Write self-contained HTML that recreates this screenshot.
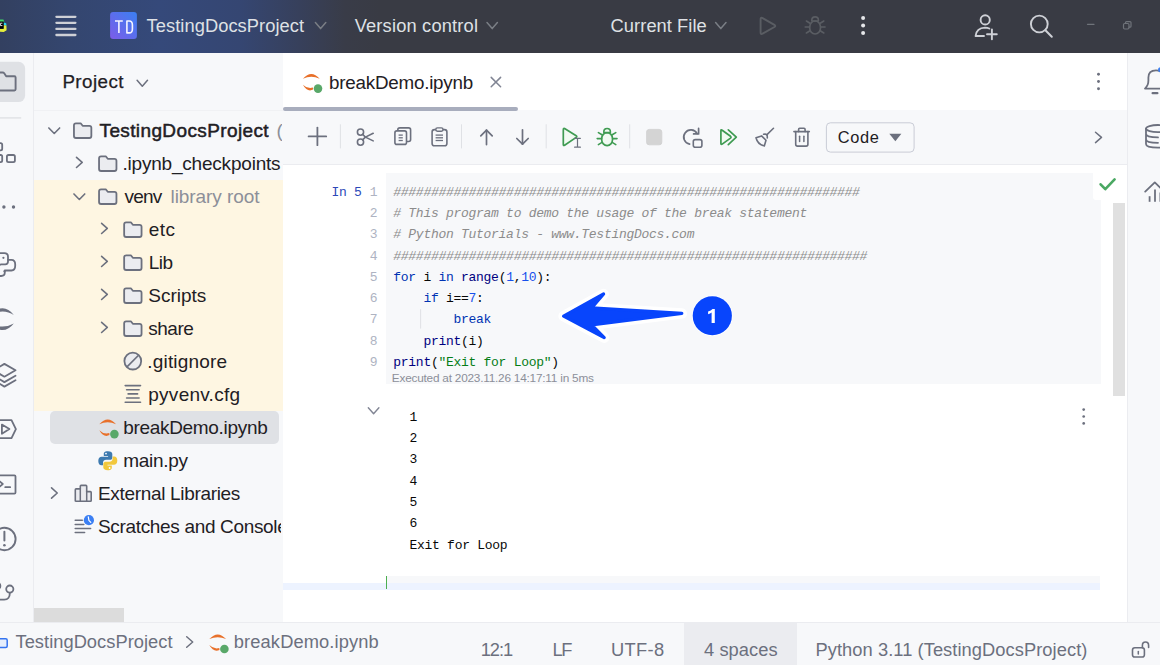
<!DOCTYPE html>
<html><head><meta charset="utf-8"><style>
html,body{margin:0;padding:0;width:1160px;height:665px;overflow:hidden;background:#fff;position:relative}
.a{position:absolute}
.t{position:absolute;white-space:pre;line-height:normal}
svg{position:absolute;overflow:visible}
#title{left:0;top:0;width:1160px;height:53px;background:#393b44}
#titleglow{left:0;top:0;width:1160px;height:53px;background:linear-gradient(90deg,#334060 0px,#34466f 70px,#35497a 160px,#354672 240px,#37405b 300px,#393c48 345px,#393b44 380px)}
#lstrip{left:0;top:53px;width:33px;height:569px;background:#f7f8fa;border-right:1px solid #ebecf0}
#panel{left:34px;top:53px;width:249px;height:569px;background:#f7f8fa}
#yellow{left:34px;top:180px;width:249px;height:231px;background:#fef6e2}
#sel{left:50px;top:411.2px;width:228.5px;height:32.8px;background:#dfe1e5;border-radius:5px}
#editor{left:283px;top:53px;width:844px;height:569px;background:#fff}
#rstrip{left:1127px;top:53px;width:33px;height:569px;background:#f7f8fa;border-left:1px solid #ebecf0}
#status{left:0;top:622px;width:1160px;height:43px;background:#f7f8fa;border-top:1px solid #ebecf0}
#tabline{left:283px;top:107px;width:235px;height:4px;background:#a8adbd;border-radius:2px}
#toolbar{left:283px;top:110px;width:844px;height:54px;background:#f7f8fa;border-bottom:1px solid #ebecf0}
#cell{left:385.5px;top:173px;width:715.5px;height:211px;background:#f7f8fa}
#vscroll{left:1113px;top:203px;width:12.3px;height:192.6px;background:#e0e0e0}
#hscroll{left:34px;top:608px;width:90px;height:13.5px;background:#dcdcdc}
#checkbox{left:1092.5px;top:173px;width:34.5px;height:26.5px;background:#fff;border-bottom-left-radius:3px}
#emptycell{left:387px;top:575.7px;width:713px;height:14px;background:#f7f8fa}
#curline{left:283px;top:583px;width:817px;height:6.6px;background:#edf3ff}
#cursor{left:385.6px;top:575.7px;width:1.7px;height:13.4px;background:#4caf50}
#spaces{left:684px;top:623px;width:113px;height:42px;background:#ebecf0}
#hdrline{left:34px;top:110px;width:249px;height:1px;background:#f0f1f4}

</style></head><body>
<div class="a" id="title"></div>
<div class="a" id="titleglow"></div>
<div class="a" id="lstrip"></div>
<div class="a" id="panel"></div>
<div class="a" id="hdrline"></div>
<div class="a" id="yellow"></div>
<div class="a" id="sel"></div>
<div class="a" id="editor"></div>
<div class="a" id="rstrip"></div>
<div class="a" id="status"></div>
<div class="a" id="spaces"></div>
<div class="a" id="toolbar"></div>
<div class="a" id="tabline"></div>
<div class="a" id="cell"></div>
<div class="a" id="vscroll"></div>
<div class="a" id="hscroll"></div>
<div class="a" id="checkbox"></div>
<div class="a" id="emptycell"></div>
<div class="a" id="curline"></div>
<div class="a" id="cursor"></div>

<svg width="1160" height="665" style="left:0;top:0"><path d="M73.95,125.30 Q73.95,123.30 75.95,123.30 L80.65,123.30 L82.65,125.80 L89.35,125.80 Q91.35,125.80 91.35,127.80 L91.35,136.00 Q91.35,138.00 89.35,138.00 L75.95,138.00 Q73.95,138.00 73.95,136.00 Z" fill="#ebecf0" stroke="#6c707e" stroke-width="1.8" stroke-linejoin="round"/><path d="M48.85,127.95 L54.25,133.45 L59.65,127.95" fill="none" stroke="#6c707e" stroke-width="1.6" stroke-linecap="round" stroke-linejoin="round"/><path d="M99.05,158.30 Q99.05,156.30 101.05,156.30 L105.75,156.30 L107.75,158.80 L114.45,158.80 Q116.45,158.80 116.45,160.80 L116.45,169.00 Q116.45,171.00 114.45,171.00 L101.05,171.00 Q99.05,171.00 99.05,169.00 Z" fill="#ebecf0" stroke="#6c707e" stroke-width="1.8" stroke-linejoin="round"/><path d="M76.50,157.30 L82.20,162.40 L76.50,167.50" fill="none" stroke="#6c707e" stroke-width="1.6" stroke-linecap="round" stroke-linejoin="round"/><path d="M99.05,191.30 Q99.05,189.30 101.05,189.30 L105.75,189.30 L107.75,191.80 L114.45,191.80 Q116.45,191.80 116.45,193.80 L116.45,202.00 Q116.45,204.00 114.45,204.00 L101.05,204.00 Q99.05,204.00 99.05,202.00 Z" fill="#ebecf0" stroke="#6c707e" stroke-width="1.8" stroke-linejoin="round"/><path d="M73.95,193.95 L79.35,199.45 L84.75,193.95" fill="none" stroke="#6c707e" stroke-width="1.6" stroke-linecap="round" stroke-linejoin="round"/><path d="M124.15,224.30 Q124.15,222.30 126.15,222.30 L130.85,222.30 L132.85,224.80 L139.55,224.80 Q141.55,224.80 141.55,226.80 L141.55,235.00 Q141.55,237.00 139.55,237.00 L126.15,237.00 Q124.15,237.00 124.15,235.00 Z" fill="#ebecf0" stroke="#6c707e" stroke-width="1.8" stroke-linejoin="round"/><path d="M101.60,223.30 L107.30,228.40 L101.60,233.50" fill="none" stroke="#6c707e" stroke-width="1.6" stroke-linecap="round" stroke-linejoin="round"/><path d="M124.15,257.30 Q124.15,255.30 126.15,255.30 L130.85,255.30 L132.85,257.80 L139.55,257.80 Q141.55,257.80 141.55,259.80 L141.55,268.00 Q141.55,270.00 139.55,270.00 L126.15,270.00 Q124.15,270.00 124.15,268.00 Z" fill="#ebecf0" stroke="#6c707e" stroke-width="1.8" stroke-linejoin="round"/><path d="M101.60,256.30 L107.30,261.40 L101.60,266.50" fill="none" stroke="#6c707e" stroke-width="1.6" stroke-linecap="round" stroke-linejoin="round"/><path d="M124.15,290.30 Q124.15,288.30 126.15,288.30 L130.85,288.30 L132.85,290.80 L139.55,290.80 Q141.55,290.80 141.55,292.80 L141.55,301.00 Q141.55,303.00 139.55,303.00 L126.15,303.00 Q124.15,303.00 124.15,301.00 Z" fill="#ebecf0" stroke="#6c707e" stroke-width="1.8" stroke-linejoin="round"/><path d="M101.60,289.30 L107.30,294.40 L101.60,299.50" fill="none" stroke="#6c707e" stroke-width="1.6" stroke-linecap="round" stroke-linejoin="round"/><path d="M124.15,323.30 Q124.15,321.30 126.15,321.30 L130.85,321.30 L132.85,323.80 L139.55,323.80 Q141.55,323.80 141.55,325.80 L141.55,334.00 Q141.55,336.00 139.55,336.00 L126.15,336.00 Q124.15,336.00 124.15,334.00 Z" fill="#ebecf0" stroke="#6c707e" stroke-width="1.8" stroke-linejoin="round"/><path d="M101.60,322.30 L107.30,327.40 L101.60,332.50" fill="none" stroke="#6c707e" stroke-width="1.6" stroke-linecap="round" stroke-linejoin="round"/><path d="M99.30,424.20 Q107.70,414.80 116.10,424.20 Q107.70,420.40 99.30,424.20 Z" fill="#e8702a"/><path d="M99.30,430.20 Q103.70,438.00 109.50,435.10 L109.30,433.10 Q103.70,434.60 99.30,430.20 Z" fill="#e8702a"/><circle cx="114.40" cy="434.10" r="4.30" fill="#59a869"/><g transform="translate(97.8,450.8) scale(1.0)"><path d="M10 0.5 C6.5 0.5 6 2 6 3.2 V5.2 H10.3 V6 H3.8 C2 6 0.5 7.3 0.5 10.2 C0.5 13 1.8 14.4 3.6 14.4 H5.2 V12 C5.2 10.3 6.6 9 8.3 9 H12.3 C13.7 9 14.5 8 14.5 6.6 V3.2 C14.5 1.8 13.2 0.5 10 0.5 Z" fill="#3d7ab0"/><path d="M10 19.5 C13.5 19.5 14 18 14 16.8 V14.8 H9.7 V14 H16.2 C18 14 19.5 12.7 19.5 9.8 C19.5 7 18.2 5.6 16.4 5.6 H14.8 V8 C14.8 9.7 13.4 11 11.7 11 H7.7 C6.3 11 5.5 12 5.5 13.4 V16.8 C5.5 18.2 6.8 19.5 10 19.5 Z" fill="#f2c83c"/><circle cx="8.2" cy="2.8" r="0.9" fill="#fff"/><circle cx="11.8" cy="17.2" r="0.9" fill="#fff"/></g><path d="M302.90,78.70 Q311.30,69.30 319.70,78.70 Q311.30,74.90 302.90,78.70 Z" fill="#e8702a"/><path d="M302.90,84.70 Q307.30,92.50 313.10,89.60 L312.90,87.60 Q307.30,89.10 302.90,84.70 Z" fill="#e8702a"/><circle cx="318.00" cy="88.60" r="4.30" fill="#59a869"/><path d="M209.30,639.10 Q217.70,629.70 226.10,639.10 Q217.70,635.30 209.30,639.10 Z" fill="#e8702a"/><path d="M209.30,645.10 Q213.70,652.90 219.50,650.00 L219.30,648.00 Q213.70,649.50 209.30,645.10 Z" fill="#e8702a"/><circle cx="224.40" cy="649.00" r="4.30" fill="#59a869"/><path d="M-2,19.6 H3.4 L4.3,21.8 H-2 Z" fill="#3fd86a"/><path d="M3.6,22.4 L6.2,23.2 L6.5,25.6 L3.6,25.6 Z" fill="#27d3f0"/><path d="M3.6,25.2 L6.4,25.6 L6.6,30.2 L3.8,31.9 L-2,31.6 V28.8 H3.6 Z" fill="#e5ee3c"/><rect x="-2" y="21.6" width="5.6" height="7.2" fill="#000"/><path d="M2.4,23.2 H0.4 V25.6 H2.4" fill="none" stroke="#ddd" stroke-width="1"/><line x1="56.4" y1="16.8" x2="75.4" y2="16.8" stroke="#ced0d6" stroke-width="2.3" stroke-linecap="round"/><line x1="56.4" y1="22.8" x2="75.4" y2="22.8" stroke="#ced0d6" stroke-width="2.3" stroke-linecap="round"/><line x1="56.4" y1="28.9" x2="75.4" y2="28.9" stroke="#ced0d6" stroke-width="2.3" stroke-linecap="round"/><line x1="56.4" y1="35.0" x2="75.4" y2="35.0" stroke="#ced0d6" stroke-width="2.3" stroke-linecap="round"/><defs><linearGradient id="tdg" x1="1" y1="0" x2="0" y2="1"><stop offset="0" stop-color="#3a80f2"/><stop offset="1" stop-color="#7d5ce8"/></linearGradient></defs><rect x="110.1" y="11.9" width="26.8" height="27" rx="3" fill="url(#tdg)"/><path d="M115,21.0 H122.8 M118.9,21.0 V32.9" fill="none" stroke="#f4f4ff" stroke-width="1.6" stroke-linecap="butt" stroke-linejoin="round" /><path d="M126.9,21.0 H129.2 Q132.4,21.0 132.4,25 V28.9 Q132.4,32.9 129.2,32.9 H126.9 Z" fill="none" stroke="#f4f4ff" stroke-width="1.6" stroke-linecap="round" stroke-linejoin="round" /><path d="M315.40,22.60 L320.60,28.60 L325.80,22.60" fill="none" stroke="#7a7e85" stroke-width="1.5" stroke-linecap="round" stroke-linejoin="round"/><path d="M487.00,22.60 L492.20,28.60 L497.40,22.60" fill="none" stroke="#7a7e85" stroke-width="1.5" stroke-linecap="round" stroke-linejoin="round"/><path d="M715.60,22.60 L720.80,28.60 L726.00,22.60" fill="none" stroke="#7a7e85" stroke-width="1.5" stroke-linecap="round" stroke-linejoin="round"/><path d="M760.6,19.2 L760.6,32.6 Q760.6,34.8 762.6,33.7 L774.4,27.0 Q776.2,25.9 774.4,24.8 L762.6,18.1 Q760.6,17.0 760.6,19.2 Z" fill="none" stroke="#5a5d63" stroke-width="1.9" stroke-linecap="round" stroke-linejoin="round" /><g transform="translate(208.0,-111.6)"><rect x="601.7" y="132.6" width="10.8" height="13.0" rx="5.4" ry="5.9" fill="none" stroke="#5a5d63" stroke-width="1.7"/><path d="M603.8,132.6 V131.8 Q603.8,128.5 607.1,128.5 Q610.4,128.5 610.4,131.8 V132.6 Z" fill="none" stroke="#5a5d63" stroke-width="1.6" stroke-linecap="round" stroke-linejoin="round" /><line x1="601.6" y1="138.6" x2="597.2" y2="138.6" stroke="#5a5d63" stroke-width="1.6" stroke-linecap="round"/><line x1="612.6" y1="138.6" x2="617.0" y2="138.6" stroke="#5a5d63" stroke-width="1.6" stroke-linecap="round"/><line x1="602.0" y1="134.8" x2="598.4" y2="132.6" stroke="#5a5d63" stroke-width="1.6" stroke-linecap="round"/><line x1="612.2" y1="134.8" x2="615.8" y2="132.6" stroke="#5a5d63" stroke-width="1.6" stroke-linecap="round"/><line x1="602.0" y1="142.4" x2="598.4" y2="144.6" stroke="#5a5d63" stroke-width="1.6" stroke-linecap="round"/><line x1="612.2" y1="142.4" x2="615.8" y2="144.6" stroke="#5a5d63" stroke-width="1.6" stroke-linecap="round"/></g><circle cx="863.1" cy="18.1" r="2.0" fill="#e6e7ea"/><circle cx="863.1" cy="25.6" r="2.0" fill="#e6e7ea"/><circle cx="863.1" cy="32.9" r="2.0" fill="#e6e7ea"/><circle cx="985.2" cy="19.9" r="4.6" fill="none" stroke="#ced0d6" stroke-width="1.9"/><path d="M975.6,36 Q976.5,27.8 985,27.6 Q987.5,27.6 989.3,28.5 M975.6,36 H984" fill="none" stroke="#ced0d6" stroke-width="1.9" stroke-linecap="round" stroke-linejoin="round" /><line x1="991.9" y1="29.4" x2="991.9" y2="39.2" stroke="#ced0d6" stroke-width="1.9" stroke-linecap="round"/><line x1="987" y1="34.3" x2="996.8" y2="34.3" stroke="#ced0d6" stroke-width="1.9" stroke-linecap="round"/><circle cx="1039.3" cy="24.0" r="8.4" fill="none" stroke="#ced0d6" stroke-width="1.9"/><line x1="1045.4" y1="30.2" x2="1051.8" y2="36.8" stroke="#ced0d6" stroke-width="2.0" stroke-linecap="round"/><line x1="1087.5" y1="24.3" x2="1094" y2="24.3" stroke="#6f737a" stroke-width="1.3" stroke-linecap="round"/><rect x="1123.5" y="23.5" width="5.5" height="5.5" rx="1.2" fill="none" stroke="#6f737a" stroke-width="1.2"/><path d="M1125.5,23.5 V22.6 Q1125.5,21.6 1126.5,21.6 H1130 Q1131,21.6 1131,22.6 V26.2 Q1131,27.2 1130,27.2 H1129" fill="none" stroke="#6f737a" stroke-width="1.2" stroke-linecap="round" stroke-linejoin="round" /><path d="M137.10,80.30 L142.30,86.30 L147.50,80.30" fill="none" stroke="#6c707e" stroke-width="1.5" stroke-linecap="round" stroke-linejoin="round"/><line x1="491.2" y1="77.4" x2="500.6" y2="86.8" stroke="#818594" stroke-width="1.5" stroke-linecap="round"/><line x1="500.6" y1="77.4" x2="491.2" y2="86.8" stroke="#818594" stroke-width="1.5" stroke-linecap="round"/><circle cx="1098.5" cy="74.2" r="1.45" fill="#6c707e"/><circle cx="1098.5" cy="81.5" r="1.45" fill="#6c707e"/><circle cx="1098.5" cy="88.7" r="1.45" fill="#6c707e"/><line x1="340.4" y1="124.3" x2="340.4" y2="148.4" stroke="#dfe1e5" stroke-width="1.0" stroke-linecap="butt"/><line x1="461.5" y1="124.3" x2="461.5" y2="148.4" stroke="#dfe1e5" stroke-width="1.0" stroke-linecap="butt"/><line x1="546.2" y1="124.3" x2="546.2" y2="148.4" stroke="#dfe1e5" stroke-width="1.0" stroke-linecap="butt"/><line x1="629.7" y1="124.3" x2="629.7" y2="148.4" stroke="#dfe1e5" stroke-width="1.0" stroke-linecap="butt"/><line x1="317.4" y1="127.6" x2="317.4" y2="145.2" stroke="#6c707e" stroke-width="1.8" stroke-linecap="round"/><line x1="308.6" y1="136.4" x2="326.2" y2="136.4" stroke="#6c707e" stroke-width="1.8" stroke-linecap="round"/><circle cx="360.5" cy="132.1" r="3.1" fill="none" stroke="#6c707e" stroke-width="1.6"/><circle cx="360.5" cy="142.1" r="3.1" fill="none" stroke="#6c707e" stroke-width="1.6"/><path d="M362.6,134.3 L365.4,137.1 L373.2,140.9" fill="none" stroke="#6c707e" stroke-width="1.6" stroke-linecap="round" stroke-linejoin="round" /><path d="M362.6,139.9 L365.4,137.1 L373.2,133.3" fill="none" stroke="#6c707e" stroke-width="1.6" stroke-linecap="round" stroke-linejoin="round" /><path d="M397.8,130 V129.8 Q397.8,127.9 399.9,127.9 H408.6 Q410.6,127.9 410.6,129.9 V139.5 Q410.6,141.5 408.6,141.5 H407.4" fill="none" stroke="#6c707e" stroke-width="1.6" stroke-linecap="round" stroke-linejoin="round" /><rect x="394.9" y="130.9" width="11.6" height="13.5" rx="2" fill="none" stroke="#6c707e" stroke-width="1.6"/><line x1="398.6" y1="135.1" x2="402.8" y2="135.1" stroke="#6c707e" stroke-width="1.3" stroke-linecap="butt"/><line x1="398.6" y1="137.8" x2="402.8" y2="137.8" stroke="#6c707e" stroke-width="1.3" stroke-linecap="butt"/><line x1="398.6" y1="140.5" x2="402.8" y2="140.5" stroke="#6c707e" stroke-width="1.3" stroke-linecap="butt"/><rect x="432.1" y="129.6" width="14.8" height="16.2" rx="2.3" fill="none" stroke="#6c707e" stroke-width="1.6"/><rect x="435.8" y="127.9" width="7.2" height="3.3" rx="1.6" fill="#f7f8fa" stroke="#6c707e" stroke-width="1.4"/><line x1="435.6" y1="135.1" x2="443" y2="135.1" stroke="#6c707e" stroke-width="1.3" stroke-linecap="butt"/><line x1="435.6" y1="137.8" x2="443" y2="137.8" stroke="#6c707e" stroke-width="1.3" stroke-linecap="butt"/><line x1="435.6" y1="140.5" x2="443" y2="140.5" stroke="#6c707e" stroke-width="1.3" stroke-linecap="butt"/><line x1="486.5" y1="130.2" x2="486.5" y2="144.6" stroke="#6c707e" stroke-width="1.7" stroke-linecap="round"/><path d="M480.8,135.8 L486.5,130.1 L492.2,135.8" fill="none" stroke="#6c707e" stroke-width="1.7" stroke-linecap="round" stroke-linejoin="round" /><line x1="522.5" y1="129.8" x2="522.5" y2="144.2" stroke="#6c707e" stroke-width="1.7" stroke-linecap="round"/><path d="M516.8,138.5 L522.5,144.2 L528.2,138.5" fill="none" stroke="#6c707e" stroke-width="1.7" stroke-linecap="round" stroke-linejoin="round" /><path d="M563.3,130.2 V144.5 Q563.3,146 564.6,145.3 L576.2,137.4 Q577.4,136.5 576.2,135.7 L564.6,128.5 Q563.3,127.8 563.3,130.2 Z" fill="#f1faf2" stroke="#3f9b52" stroke-width="1.7" stroke-linecap="round" stroke-linejoin="round" /><path d="M574.6,138.3 H580.4 M577.5,138.3 V147.2 M574.6,147.2 H580.4" fill="none" stroke="#6c707e" stroke-width="1.2" stroke-linecap="round" stroke-linejoin="round" /><rect x="601.7" y="132.6" width="10.8" height="13.0" rx="5.4" ry="5.9" fill="#f1faf2" stroke="#3f9b52" stroke-width="1.7"/><path d="M603.8,132.6 V131.8 Q603.8,128.5 607.1,128.5 Q610.4,128.5 610.4,131.8 V132.6 Z" fill="#f1faf2" stroke="#3f9b52" stroke-width="1.6" stroke-linecap="round" stroke-linejoin="round" /><line x1="601.6" y1="138.6" x2="597.2" y2="138.6" stroke="#3f9b52" stroke-width="1.6" stroke-linecap="round"/><line x1="612.6" y1="138.6" x2="617.0" y2="138.6" stroke="#3f9b52" stroke-width="1.6" stroke-linecap="round"/><line x1="602.0" y1="134.8" x2="598.4" y2="132.6" stroke="#3f9b52" stroke-width="1.6" stroke-linecap="round"/><line x1="612.2" y1="134.8" x2="615.8" y2="132.6" stroke="#3f9b52" stroke-width="1.6" stroke-linecap="round"/><line x1="602.0" y1="142.4" x2="598.4" y2="144.6" stroke="#3f9b52" stroke-width="1.6" stroke-linecap="round"/><line x1="612.2" y1="142.4" x2="615.8" y2="144.6" stroke="#3f9b52" stroke-width="1.6" stroke-linecap="round"/><rect x="646.6" y="129.4" width="15.2" height="15.4" rx="2.6" fill="#d4d4d4" stroke="#cfcfcf" stroke-width="0.8"/><path d="M697.2,133.6 A7.2,7.2 0 1 0 689.6,144.2" fill="none" stroke="#6c707e" stroke-width="1.7" stroke-linecap="round" stroke-linejoin="round" /><path d="M693.6,133.9 H698.6 V128.4" fill="none" stroke="#6c707e" stroke-width="1.7" stroke-linecap="round" stroke-linejoin="round" /><rect x="693.3" y="139.6" width="8.6" height="7.6" rx="2" fill="#f7f8fa" stroke="#6c707e" stroke-width="1.6"/><path d="M720.9,130.8 V143.4 Q720.9,145 722.2,144.1 L730.5,138.1 Q731.6,137.2 730.5,136.3 L722.2,130.2 Q720.9,129.2 720.9,130.8 Z" fill="#f1faf2" stroke="#3f9b52" stroke-width="1.7" stroke-linecap="round" stroke-linejoin="round" /><path d="M728.3,129.8 L736.3,137.2 L728.3,144.6" fill="none" stroke="#3f9b52" stroke-width="1.7" stroke-linecap="round" stroke-linejoin="round" /><line x1="773.5" y1="128.3" x2="767.0" y2="134.6" stroke="#6c707e" stroke-width="1.6" stroke-linecap="round"/><path d="M763.6,134.3 Q767.8,133.2 767.3,138.0" fill="none" stroke="#6c707e" stroke-width="1.6" stroke-linecap="round" stroke-linejoin="round" /><path d="M756.0,137.7 L761.6,135.9 L766.0,140.3 L764.3,145.9 Q757.6,144.4 756.0,137.7 Z" fill="none" stroke="#6c707e" stroke-width="1.6" stroke-linecap="round" stroke-linejoin="round" /><line x1="793.9" y1="131.6" x2="809.3" y2="131.6" stroke="#6c707e" stroke-width="1.6" stroke-linecap="round"/><path d="M798.6,131.6 V129.4 Q798.6,128.3 799.7,128.3 H804 Q805.1,128.3 805.1,129.4 V131.6" fill="none" stroke="#6c707e" stroke-width="1.6" stroke-linecap="round" stroke-linejoin="round" /><path d="M795.7,131.6 V144.3 Q795.7,146.1 797.5,146.1 H806.1 Q807.9,146.1 807.9,144.3 V131.6" fill="none" stroke="#6c707e" stroke-width="1.6" stroke-linecap="round" stroke-linejoin="round" /><line x1="799.6" y1="136.2" x2="799.6" y2="141.6" stroke="#6c707e" stroke-width="1.5" stroke-linecap="round"/><line x1="803.9" y1="136.2" x2="803.9" y2="141.6" stroke="#6c707e" stroke-width="1.5" stroke-linecap="round"/><rect x="826.4" y="122.8" width="87.7" height="29.3" rx="4" fill="#f7f8fa" stroke="#c9ccd6" stroke-width="1.0"/><path d="M889.3,133.8 H901.4 L895.35,141.2 Z" fill="#6c707e"/><path d="M1095.50,132.20 L1101.50,137.40 L1095.50,142.60" fill="none" stroke="#6c707e" stroke-width="1.5" stroke-linecap="round" stroke-linejoin="round"/><circle cx="132.8" cy="361.1" r="8.4" fill="#ebecf0" stroke="#6c707e" stroke-width="1.8"/><line x1="138.3" y1="355.5" x2="127" y2="366.8" stroke="#6c707e" stroke-width="1.7" stroke-linecap="butt"/><line x1="125.2" y1="385.6" x2="140.5" y2="385.6" stroke="#6c707e" stroke-width="1.6" stroke-linecap="round"/><line x1="126.6" y1="389.8" x2="139.1" y2="389.8" stroke="#6c707e" stroke-width="1.6" stroke-linecap="round"/><line x1="128.1" y1="393.9" x2="137.6" y2="393.9" stroke="#6c707e" stroke-width="1.6" stroke-linecap="round"/><line x1="126.6" y1="398.0" x2="139.1" y2="398.0" stroke="#6c707e" stroke-width="1.6" stroke-linecap="round"/><line x1="125.2" y1="402.2" x2="140.5" y2="402.2" stroke="#6c707e" stroke-width="1.6" stroke-linecap="round"/><path d="M51.55,487.90 L57.25,493.00 L51.55,498.10" fill="none" stroke="#6c707e" stroke-width="1.6" stroke-linecap="round" stroke-linejoin="round"/><path d="M75.3,501 V489.7 Q75.3,488.9 76.1,488.9 H80.3 V486.2 Q80.3,485.4 81.1,485.4 H85.9 Q86.7,485.4 86.7,486.2 V491.6 H90.4 Q91.2,491.6 91.2,492.4 V500.4 Q91.2,501.2 90.4,501.2 H76.1 Q75.3,501.2 75.3,500.4 Z" fill="#ebecf0" stroke="#6c707e" stroke-width="1.6" stroke-linecap="round" stroke-linejoin="round" /><line x1="80.3" y1="488.9" x2="80.3" y2="501.2" stroke="#6c707e" stroke-width="1.5" stroke-linecap="round"/><line x1="86.7" y1="491.6" x2="86.7" y2="501.2" stroke="#6c707e" stroke-width="1.5" stroke-linecap="round"/><line x1="75.2" y1="520.2" x2="82.3" y2="520.2" stroke="#6c707e" stroke-width="1.5" stroke-linecap="round"/><line x1="75.2" y1="524.4" x2="83.8" y2="524.4" stroke="#6c707e" stroke-width="1.5" stroke-linecap="round"/><line x1="75.2" y1="528.6" x2="90.6" y2="528.6" stroke="#6c707e" stroke-width="1.5" stroke-linecap="round"/><line x1="75.2" y1="532.6" x2="84.6" y2="532.6" stroke="#6c707e" stroke-width="1.5" stroke-linecap="round"/><circle cx="88.9" cy="520.2" r="5.1" fill="#3b7ff3"/><path d="M88.3,516.8 L88.9,520.4 L90.8,522.3" fill="none" stroke="#ffffff" stroke-width="1.2" stroke-linecap="round" stroke-linejoin="round" /><rect x="-8" y="61.7" width="33.1" height="40.4" rx="6.6" fill="#dfe1e5"/><path d="M-4,72.5 H2.6 Q3.6,72.5 4.2,73.3 L6.2,76.3 H14.4 Q15.6,76.3 15.6,77.5 V89.3 Q15.6,90.5 14.4,90.5 H-4" fill="none" stroke="#6c707e" stroke-width="1.9" stroke-linecap="round" stroke-linejoin="round" /><line x1="0" y1="117.9" x2="21.2" y2="117.9" stroke="#dfe1e5" stroke-width="1.4" stroke-linecap="butt"/><rect x="-6" y="143.2" width="8.2" height="7.2" rx="1.6" fill="none" stroke="#6c707e" stroke-width="1.8"/><rect x="-6" y="155.0" width="8.2" height="7.2" rx="1.6" fill="none" stroke="#6c707e" stroke-width="1.8"/><rect x="6.9" y="155.0" width="8.0" height="7.2" rx="1.6" fill="none" stroke="#6c707e" stroke-width="1.8"/><circle cx="3.9" cy="207.0" r="1.7" fill="#6c707e"/><circle cx="13.5" cy="207.0" r="1.7" fill="#6c707e"/><path d="M-4,262.6 V256.6 Q-4,253.2 -0.4,253.2 H4.4 Q8,253.2 8,256.8 V261.6 Q8,264.4 5.2,264.4 H1.2 Q-1.3,264.4 -1.3,267 V270.5" fill="none" stroke="#6c707e" stroke-width="1.8" stroke-linecap="round" stroke-linejoin="round" /><path d="M8,259.8 H11.4 Q15.2,259.8 15.2,264.4 V265.8 Q15.2,270.5 11.4,270.5 H4.8 M4.8,270.5 V272.6 Q4.8,276 1.2,276 H-4" fill="none" stroke="#6c707e" stroke-width="1.8" stroke-linecap="round" stroke-linejoin="round" /><circle cx="3.4" cy="257.8" r="1.1" fill="#6c707e"/><circle cx="4.4" cy="271.3" r="1.1" fill="#6c707e"/><path d="M-10.5,315 Q3.5,301.5 13.8,315 Q3.5,308 -10.5,315 Z" fill="#6c707e"/><path d="M-10.5,323.5 Q3.5,336.7 13.8,323.5 Q3.5,329.6 -10.5,323.5 Z" fill="#6c707e"/><path d="M-6.7,370.3 L4.4,363.9 L15.5,370.3 L4.4,376.7 Z" fill="none" stroke="#6c707e" stroke-width="1.8" stroke-linecap="round" stroke-linejoin="round" /><path d="M-6.7,375.7 L4.4,382.1 L15.5,375.7" fill="none" stroke="#6c707e" stroke-width="1.8" stroke-linecap="round" stroke-linejoin="round" /><path d="M-6.7,380.2 L4.4,386.6 L15.5,380.2" fill="none" stroke="#6c707e" stroke-width="1.8" stroke-linecap="round" stroke-linejoin="round" /><path d="M-4,420.2 H11.5 L15.9,429.1 L11.5,438.2 H-4" fill="none" stroke="#6c707e" stroke-width="1.8" stroke-linecap="round" stroke-linejoin="round" /><path d="M1.9,424.6 L9.4,429.1 L1.9,433.7 Z" fill="none" stroke="#6c707e" stroke-width="1.8" stroke-linecap="round" stroke-linejoin="round" /><path d="M-4,475.4 H14.4 Q15.5,475.4 15.5,476.5 V492.4 Q15.5,493.6 14.4,493.6 H-4" fill="none" stroke="#6c707e" stroke-width="1.8" stroke-linecap="round" stroke-linejoin="round" /><path d="M-1,480.8 L2.8,484 L-1,487.2" fill="none" stroke="#6c707e" stroke-width="1.7" stroke-linecap="round" stroke-linejoin="round" /><line x1="5.2" y1="487.2" x2="10.2" y2="487.2" stroke="#6c707e" stroke-width="1.7" stroke-linecap="round"/><circle cx="4.4" cy="539.0" r="11.2" fill="none" stroke="#6c707e" stroke-width="1.9"/><line x1="4.4" y1="531.8" x2="4.4" y2="540.6" stroke="#6c707e" stroke-width="2.0" stroke-linecap="round"/><circle cx="4.4" cy="545.3" r="1.3" fill="#6c707e"/><circle cx="9.8" cy="589.1" r="3.6" fill="none" stroke="#6c707e" stroke-width="1.8"/><circle cx="-3.2" cy="585.9" r="3.6" fill="none" stroke="#6c707e" stroke-width="1.8"/><path d="M-6,599.6 H4.2 Q9.8,599.6 9.8,593.2" fill="none" stroke="#6c707e" stroke-width="1.8" stroke-linecap="round" stroke-linejoin="round" /><path d="M1145,88.6 Q1148.4,85.6 1148.4,80.6 V77.5 Q1148.4,70.3 1156,70.3 Q1163,70.3 1163,77.5 M1145,88.6 H1165" fill="none" stroke="#6c707e" stroke-width="1.8" stroke-linecap="round" stroke-linejoin="round" /><path d="M1152.6,93.2 H1157.4" fill="none" stroke="#6c707e" stroke-width="2.2" stroke-linecap="round" stroke-linejoin="round" /><circle cx="1160.5" cy="69.8" r="2.5" fill="#3b7ff3"/><ellipse cx="1158" cy="128.6" rx="12" ry="3.6" fill="none" stroke="#6c707e" stroke-width="1.8"/><path d="M1146,128.6 V144 Q1146,147.6 1158,147.6 Q1170,147.6 1170,144 V128.6 M1146,133.8 Q1146,137.4 1158,137.4 M1146,139.2 Q1146,142.8 1158,142.8" fill="none" stroke="#6c707e" stroke-width="1.8" stroke-linecap="round" stroke-linejoin="round" /><path d="M1145.2,191.6 L1154.8,182.4 L1164.4,191.6" fill="none" stroke="#6c707e" stroke-width="1.8" stroke-linecap="round" stroke-linejoin="round" /><line x1="1149.6" y1="196.2" x2="1149.6" y2="201.8" stroke="#6c707e" stroke-width="1.8" stroke-linecap="butt"/><line x1="1155.0" y1="189.6" x2="1155.0" y2="201.8" stroke="#6c707e" stroke-width="1.8" stroke-linecap="butt"/><line x1="1160.4" y1="192.6" x2="1160.4" y2="201.8" stroke="#6c707e" stroke-width="1.8" stroke-linecap="butt"/><rect x="-3" y="638.8" width="10.2" height="8.8" rx="1.5" fill="#e6eefc" stroke="#3574f0" stroke-width="1.5"/><path d="M186.70,636.80 L192.70,642.00 L186.70,647.20" fill="none" stroke="#6c707e" stroke-width="1.5" stroke-linecap="round" stroke-linejoin="round"/><rect x="1132.5" y="647.8" width="11.9" height="9.2" rx="2.3" fill="none" stroke="#6c707e" stroke-width="1.6"/><path d="M1142.4,647.8 V645.4 Q1142.4,642 1145.5,642 Q1148.6,642 1148.6,645.4 V647.4" fill="none" stroke="#6c707e" stroke-width="1.6" stroke-linecap="round" stroke-linejoin="round" /><line x1="1138.3" y1="651.6" x2="1138.3" y2="654.1" stroke="#6c707e" stroke-width="1.5" stroke-linecap="round"/><line x1="420.6" y1="309.2" x2="420.6" y2="328.6" stroke="#dfe1e5" stroke-width="1.0" stroke-linecap="butt"/><path d="M1100.6,184.3 L1105.3,189.2 L1114.6,179.4" fill="none" stroke="#4aa862" stroke-width="2.6" stroke-linecap="round" stroke-linejoin="round" /><path d="M368.30,407.70 L373.60,413.70 L378.90,407.70" fill="none" stroke="#818594" stroke-width="1.4" stroke-linecap="round" stroke-linejoin="round"/><circle cx="1083.7" cy="409.6" r="1.35" fill="#6c707e"/><circle cx="1083.7" cy="416.5" r="1.35" fill="#6c707e"/><circle cx="1083.7" cy="423.4" r="1.35" fill="#6c707e"/><path d="M563.6,316.2 L603.6,294.0 L591.6,307.9 L681.8,313.4 L591.6,324.8 L604.2,337.6 Z" fill="#fff" stroke="#fff" stroke-width="10.5" stroke-linejoin="round"/><path d="M563.6,316.2 L603.6,294.0 L591.6,307.9 L681.8,313.4 L591.6,324.8 L604.2,337.6 Z" fill="#0845fc" stroke="#0845fc" stroke-width="3.2" stroke-linejoin="round"/><circle cx="712.3" cy="315.75" r="20.4" fill="#fff"/><circle cx="712.3" cy="315.75" r="19.6" fill="#0845fc"/><path d="M711.6,322.9 V312.6 Q710.2,313.7 708.1,314.2 V311.6 Q711.2,310.5 712.5,308.9 H714.8 V322.9 Z" fill="#fff"/></svg>
<div class="t" id="t0" style="left:146.60px;top:15.05px;font-family:'Liberation Sans', sans-serif;font-size:18.3px;color:#dfe1e5;font-weight:400;letter-spacing:0.059px;">TestingDocsProject</div>
<div class="t" id="t1" style="left:354.70px;top:15.05px;font-family:'Liberation Sans', sans-serif;font-size:18.3px;color:#dfe1e5;font-weight:400;letter-spacing:0.166px;">Version control</div>
<div class="t" id="t2" style="left:610.60px;top:15.05px;font-family:'Liberation Sans', sans-serif;font-size:18.3px;color:#dfe1e5;font-weight:400;letter-spacing:0.060px;">Current File</div>
<div class="t" id="t3" style="left:62.40px;top:71.09px;font-family:'Liberation Sans', sans-serif;font-size:18.8px;color:#1f2024;font-weight:400;letter-spacing:0.438px;-webkit-text-stroke:0.25px #1f2024;">Project</div>
<div class="t" id="t4" style="left:99.50px;top:119.50px;font-family:'Liberation Sans', sans-serif;font-size:19px;color:#1f2024;font-weight:400;letter-spacing:0.381px;-webkit-text-stroke:0.5px #1f2024;">TestingDocsProject</div>
<div class="t" id="t5" style="left:276.50px;top:119.50px;font-family:'Liberation Sans', sans-serif;font-size:19px;color:#8c8f99;font-weight:400;letter-spacing:0.000px;width:5.5px;overflow:hidden;">(C:\Users</div>
<div class="t" id="t6" style="left:122.50px;top:152.50px;font-family:'Liberation Sans', sans-serif;font-size:19px;color:#1f2024;font-weight:400;letter-spacing:-0.207px;">.ipynb_checkpoints</div>
<div class="t" id="t7" style="left:124.50px;top:185.50px;font-family:'Liberation Sans', sans-serif;font-size:19px;color:#1f2024;font-weight:400;letter-spacing:-0.805px;">venv</div>
<div class="t" id="t8" style="left:170.50px;top:185.50px;font-family:'Liberation Sans', sans-serif;font-size:19px;color:#8c8f99;font-weight:400;letter-spacing:-0.062px;">library root</div>
<div class="t" id="t9" style="left:148.70px;top:218.50px;font-family:'Liberation Sans', sans-serif;font-size:19px;color:#1f2024;font-weight:400;letter-spacing:0.500px;">etc</div>
<div class="t" id="t10" style="left:148.70px;top:251.50px;font-family:'Liberation Sans', sans-serif;font-size:19px;color:#1f2024;font-weight:400;letter-spacing:-0.500px;">Lib</div>
<div class="t" id="t11" style="left:148.30px;top:284.50px;font-family:'Liberation Sans', sans-serif;font-size:19px;color:#1f2024;font-weight:400;letter-spacing:0.000px;">Scripts</div>
<div class="t" id="t12" style="left:148.30px;top:317.50px;font-family:'Liberation Sans', sans-serif;font-size:19px;color:#1f2024;font-weight:400;letter-spacing:-0.500px;">share</div>
<div class="t" id="t13" style="left:147.30px;top:350.50px;font-family:'Liberation Sans', sans-serif;font-size:19px;color:#1f2024;font-weight:400;letter-spacing:0.183px;">.gitignore</div>
<div class="t" id="t14" style="left:148.30px;top:383.50px;font-family:'Liberation Sans', sans-serif;font-size:19px;color:#1f2024;font-weight:400;letter-spacing:0.255px;">pyvenv.cfg</div>
<div class="t" id="t15" style="left:123.20px;top:416.50px;font-family:'Liberation Sans', sans-serif;font-size:19px;color:#1f2024;font-weight:400;letter-spacing:-0.309px;">breakDemo.ipynb</div>
<div class="t" id="t16" style="left:123.20px;top:449.50px;font-family:'Liberation Sans', sans-serif;font-size:19px;color:#1f2024;font-weight:400;letter-spacing:-0.272px;">main.py</div>
<div class="t" id="t17" style="left:98.00px;top:482.50px;font-family:'Liberation Sans', sans-serif;font-size:19px;color:#1f2024;font-weight:400;letter-spacing:-0.323px;">External Libraries</div>
<div class="t" id="t18" style="left:98.00px;top:515.50px;font-family:'Liberation Sans', sans-serif;font-size:19px;color:#1f2024;font-weight:400;letter-spacing:-0.333px;width:183px;overflow:hidden;">Scratches and Consoles</div>
<div class="t" id="t19" style="left:329.00px;top:72.29px;font-family:'Liberation Sans', sans-serif;font-size:18.8px;color:#1f2024;font-weight:400;letter-spacing:-0.214px;">breakDemo.ipynb</div>
<div class="t" id="t20" style="left:837.80px;top:127.60px;font-family:'Liberation Sans', sans-serif;font-size:16.4px;color:#1f2024;font-weight:400;letter-spacing:0.595px;">Code</div>
<div class="t" id="t21" style="left:15.50px;top:631.15px;font-family:'Liberation Sans', sans-serif;font-size:18.3px;color:#6c707e;font-weight:400;letter-spacing:0.030px;">TestingDocsProject</div>
<div class="t" id="t22" style="left:233.80px;top:631.15px;font-family:'Liberation Sans', sans-serif;font-size:18.3px;color:#6c707e;font-weight:400;letter-spacing:0.120px;">breakDemo.ipynb</div>
<div class="t" id="t23" style="left:480.70px;top:639.15px;font-family:'Liberation Sans', sans-serif;font-size:18.3px;color:#6c707e;font-weight:400;letter-spacing:-1.072px;">12:1</div>
<div class="t" id="t24" style="left:552.50px;top:639.15px;font-family:'Liberation Sans', sans-serif;font-size:18.3px;color:#6c707e;font-weight:400;letter-spacing:-1.400px;">LF</div>
<div class="t" id="t25" style="left:611.00px;top:639.15px;font-family:'Liberation Sans', sans-serif;font-size:18.3px;color:#6c707e;font-weight:400;letter-spacing:0.350px;">UTF-8</div>
<div class="t" id="t26" style="left:704.00px;top:639.15px;font-family:'Liberation Sans', sans-serif;font-size:18.3px;color:#6c707e;font-weight:400;letter-spacing:0.075px;">4 spaces</div>
<div class="t" id="t27" style="left:815.50px;top:639.15px;font-family:'Liberation Sans', sans-serif;font-size:18.3px;color:#6c707e;font-weight:400;letter-spacing:0.062px;">Python 3.11 (TestingDocsProject)</div>
<div class="t" id="t28" style="left:391.80px;top:371.03px;font-family:'Liberation Sans', sans-serif;font-size:11.8px;color:#8c8f99;font-weight:400;letter-spacing:-0.216px;">Executed at 2023.11.26 14:17:11 in 5ms</div>
<div class="t" style="left:393.3px;top:184.67px;font-family:'Liberation Mono',monospace;font-size:13.0px;letter-spacing:-0.280px"><span style="color:#8c8c8c;font-style:italic;">##############################################################</span></div>
<div class="t" style="left:363px;width:14.5px;text-align:right;top:184.67px;font-family:'Liberation Mono',monospace;font-size:13.0px;color:#aeb3c2">1</div>
<div class="t" style="left:393.3px;top:205.97px;font-family:'Liberation Mono',monospace;font-size:13.0px;letter-spacing:-0.280px"><span style="color:#8c8c8c;font-style:italic;"># This program to demo the usage of the break statement</span></div>
<div class="t" style="left:363px;width:14.5px;text-align:right;top:205.97px;font-family:'Liberation Mono',monospace;font-size:13.0px;color:#aeb3c2">2</div>
<div class="t" style="left:393.3px;top:227.27px;font-family:'Liberation Mono',monospace;font-size:13.0px;letter-spacing:-0.280px"><span style="color:#8c8c8c;font-style:italic;"># Python Tutorials - www.TestingDocs.com</span></div>
<div class="t" style="left:363px;width:14.5px;text-align:right;top:227.27px;font-family:'Liberation Mono',monospace;font-size:13.0px;color:#aeb3c2">3</div>
<div class="t" style="left:393.3px;top:248.57px;font-family:'Liberation Mono',monospace;font-size:13.0px;letter-spacing:-0.280px"><span style="color:#8c8c8c;font-style:italic;">###############################################################</span></div>
<div class="t" style="left:363px;width:14.5px;text-align:right;top:248.57px;font-family:'Liberation Mono',monospace;font-size:13.0px;color:#aeb3c2">4</div>
<div class="t" style="left:393.3px;top:269.87px;font-family:'Liberation Mono',monospace;font-size:13.0px;letter-spacing:-0.280px"><span style="color:#0033b3;">for</span><span style="color:#080808;"> i </span><span style="color:#0033b3;">in</span><span style="color:#080808;"> </span><span style="color:#000080;">range</span><span style="color:#080808;">(</span><span style="color:#1750eb;">1</span><span style="color:#080808;">,</span><span style="color:#1750eb;">10</span><span style="color:#080808;">):</span></div>
<div class="t" style="left:363px;width:14.5px;text-align:right;top:269.87px;font-family:'Liberation Mono',monospace;font-size:13.0px;color:#aeb3c2">5</div>
<div class="t" style="left:393.3px;top:291.17px;font-family:'Liberation Mono',monospace;font-size:13.0px;letter-spacing:-0.280px"><span style="color:#080808;">    </span><span style="color:#0033b3;">if</span><span style="color:#080808;"> i==</span><span style="color:#1750eb;">7</span><span style="color:#080808;">:</span></div>
<div class="t" style="left:363px;width:14.5px;text-align:right;top:291.17px;font-family:'Liberation Mono',monospace;font-size:13.0px;color:#aeb3c2">6</div>
<div class="t" style="left:393.3px;top:312.47px;font-family:'Liberation Mono',monospace;font-size:13.0px;letter-spacing:-0.280px"><span style="color:#080808;">        </span><span style="color:#0033b3;">break</span></div>
<div class="t" style="left:363px;width:14.5px;text-align:right;top:312.47px;font-family:'Liberation Mono',monospace;font-size:13.0px;color:#aeb3c2">7</div>
<div class="t" style="left:393.3px;top:333.77px;font-family:'Liberation Mono',monospace;font-size:13.0px;letter-spacing:-0.280px"><span style="color:#080808;">    </span><span style="color:#000080;">print</span><span style="color:#080808;">(i)</span></div>
<div class="t" style="left:363px;width:14.5px;text-align:right;top:333.77px;font-family:'Liberation Mono',monospace;font-size:13.0px;color:#aeb3c2">8</div>
<div class="t" style="left:393.3px;top:355.07px;font-family:'Liberation Mono',monospace;font-size:13.0px;letter-spacing:-0.280px"><span style="color:#000080;">print</span><span style="color:#080808;">(</span><span style="color:#067d17;">&quot;Exit for Loop&quot;</span><span style="color:#080808;">)</span></div>
<div class="t" style="left:363px;width:14.5px;text-align:right;top:355.07px;font-family:'Liberation Mono',monospace;font-size:13.0px;color:#aeb3c2">9</div>
<div class="t" style="left:331.5px;top:184.67px;font-family:'Liberation Mono',monospace;font-size:13.0px;letter-spacing:-0.280px;color:#2c48b8">In 5</div>
<div class="t" style="left:409.5px;top:409.87px;font-family:'Liberation Mono',monospace;font-size:13.0px;letter-spacing:-0.280px;color:#080808">1</div>
<div class="t" style="left:409.5px;top:431.17px;font-family:'Liberation Mono',monospace;font-size:13.0px;letter-spacing:-0.280px;color:#080808">2</div>
<div class="t" style="left:409.5px;top:452.47px;font-family:'Liberation Mono',monospace;font-size:13.0px;letter-spacing:-0.280px;color:#080808">3</div>
<div class="t" style="left:409.5px;top:473.77px;font-family:'Liberation Mono',monospace;font-size:13.0px;letter-spacing:-0.280px;color:#080808">4</div>
<div class="t" style="left:409.5px;top:495.07px;font-family:'Liberation Mono',monospace;font-size:13.0px;letter-spacing:-0.280px;color:#080808">5</div>
<div class="t" style="left:409.5px;top:516.37px;font-family:'Liberation Mono',monospace;font-size:13.0px;letter-spacing:-0.280px;color:#080808">6</div>
<div class="t" style="left:409.5px;top:537.67px;font-family:'Liberation Mono',monospace;font-size:13.0px;letter-spacing:-0.280px;color:#080808">Exit for Loop</div>
</body></html>
